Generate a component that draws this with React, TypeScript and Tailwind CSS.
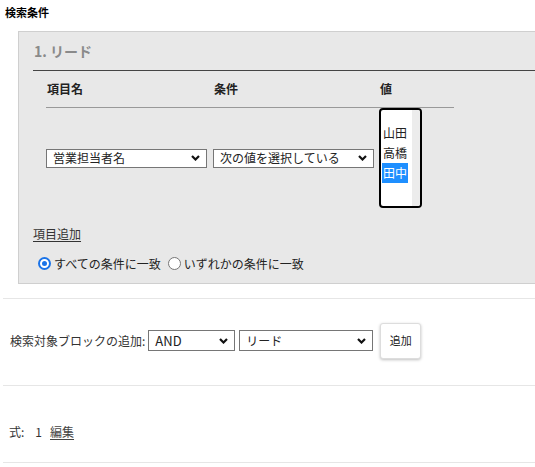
import React from 'react';

const FONT = { fontFamily: '"Noto Sans CJK JP", "Noto Sans", "Liberation Sans", sans-serif' };

const Chevron: React.FC = () => (
  <svg width="9" height="6" viewBox="0 0 9 6" className="shrink-0">
    <polyline points="1,1 4.5,4.5 8,1" fill="none" stroke="#111" strokeWidth="2.2" />
  </svg>
);

interface SelectBoxProps {
  value: string;
  className?: string;
}

const SelectBox: React.FC<SelectBoxProps> = ({ value, className = '' }) => (
  <div
    className={`flex items-center justify-between bg-white border border-[#767676] pl-[6px] pr-[6px] text-[12px] leading-none text-[#222] ${className}`}
  >
    <span>{value}</span>
    <Chevron />
  </div>
);

const Radio: React.FC<{ checked?: boolean; label: string }> = ({ checked = false, label }) => (
  <label className="flex items-center gap-[3px]">
    {checked ? (
      <span className="flex h-[13px] w-[13px] items-center justify-center rounded-full bg-[#1a73e8]">
        <span className="h-[9px] w-[9px] rounded-full border-[2px] border-white bg-[#1a73e8]" />
      </span>
    ) : (
      <span className="h-[13px] w-[13px] rounded-full border border-[#767676] bg-white" />
    )}
    <span>{label}</span>
  </label>
);

export default function App() {
  const values = ['山田', '高橋', '田中'];

  return (
    <div className="relative w-[535px] h-[467px] overflow-hidden bg-white text-[#333]" style={FONT}>
      <div className="flex h-[25px] items-center px-[5px] text-[11px] font-bold text-black">検索条件</div>

      <div className="ml-[18px] mt-[6px] h-[253px] w-[560px] border border-[#cfcfcf] bg-[#e8e8e8]">
        <div className="flex h-[38px] items-center pl-[15px] text-[14px] font-bold text-[#8a8a8a]">1. リード</div>
        <div className="ml-[14px] h-px bg-[#444]" />

        <div className="ml-[27px] w-[408px]">
          <div className="flex h-[36px] items-center text-[12px] font-bold text-[#222]">
            <span className="w-[167px] pl-[1px]">項目名</span>
            <span className="w-[166px] pl-[1px]">条件</span>
            <span className="pl-[1px]">値</span>
          </div>
          <div className="h-px bg-[#999]" />
        </div>

        <div className="ml-[27px] flex items-center">
          <SelectBox value="営業担当者名" className="h-[19px] w-[161px]" />
          <SelectBox value="次の値を選択している" className="ml-[6px] h-[19px] w-[161px]" />
          <div className="ml-[5px] flex h-[100px] w-[43px] overflow-hidden rounded-[4px] border-2 border-black bg-white">
            <div className="flex flex-1 flex-col pl-[1px] pt-[13px] text-[12px] leading-[20px] text-[#222]">
              {values.map((v, i) => (
                <span
                  key={v}
                  className={i === 2 ? 'w-[26px] bg-[#1e8fff] pl-[1px] text-white' : 'pl-[1px]'}
                >
                  {v}
                </span>
              ))}
            </div>
            <div className="w-[8px] bg-[#ececec]" />
          </div>
        </div>

        <div className="ml-[14px] mt-[17px] text-[12px] leading-[17px] text-[#333] underline underline-offset-2">
          項目追加
        </div>

        <div className="ml-[19px] mt-[13px] flex items-center gap-[7px] text-[12px] leading-[17px] text-[#222]">
          <Radio checked label="すべての条件に一致" />
          <Radio label="いずれかの条件に一致" />
        </div>
      </div>

      <div className="ml-[3px] mt-[14px] h-px bg-[#e6e6e6]" />

      <div className="flex h-[86px] items-center pb-[3px] pl-[10px] text-[12px] text-[#333]">
        <span>検索対象ブロックの追加:</span>
        <SelectBox value="AND" className="ml-[3px] h-[21px] w-[87px] text-[13px]" />
        <SelectBox value="リード" className="ml-[4px] h-[21px] w-[134px]" />
        <button className="ml-[7px] h-[36px] w-[41px] rounded-[3px] border border-[#ddd] bg-white text-[11px] text-[#222] shadow-[0_1px_3px_rgba(0,0,0,0.25)]">
          追加
        </button>
      </div>

      <div className="ml-[3px] h-px bg-[#e6e6e6]" />

      <div className="flex h-[76px] items-start pl-[9px] pt-[37px] text-[12px] leading-[17px] text-[#333]">
        <span>式:</span>
        <span className="ml-[11px]">1</span>
        <span className="ml-[8px] underline underline-offset-2 text-[#444]">編集</span>
      </div>

      <div className="ml-[3px] h-px bg-[#e6e6e6]" />
    </div>
  );
}
